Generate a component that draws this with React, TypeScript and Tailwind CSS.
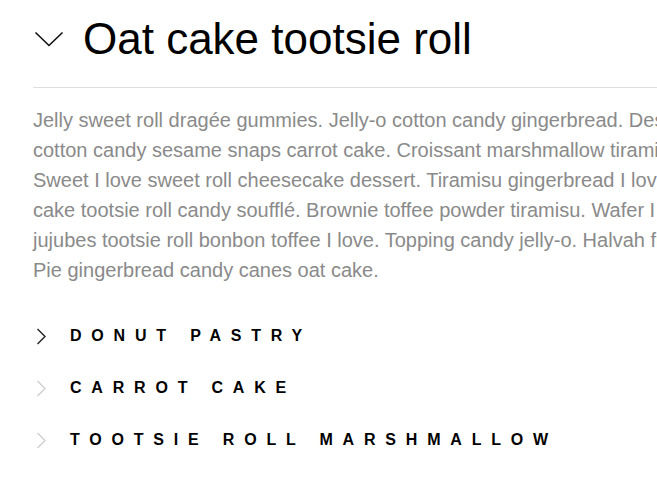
import { ReactNode } from "react"

const lines = [
  "Jelly sweet roll dragée gummies. Jelly-o cotton candy gingerbread. Dessert jelly",
  "cotton candy sesame snaps carrot cake. Croissant marshmallow tiramisu halvah.",
  "Sweet I love sweet roll cheesecake dessert. Tiramisu gingerbread I love muffin",
  "cake tootsie roll candy soufflé. Brownie toffee powder tiramisu. Wafer I love",
  "jujubes tootsie roll bonbon toffee I love. Topping candy jelly-o. Halvah fruitcake",
  "Pie gingerbread candy canes oat cake.",
]

const items = [
  { label: "Donut pastry", active: true },
  { label: "Carrot cake", active: false },
  { label: "Tootsie roll marshmallow", active: false },
]

const ChevronDown = () => (
  <svg width="30" height="16" viewBox="0 0 30 16" fill="none">
    <polyline points="1.5,1.5 15,14.5 28.5,1.5" stroke="#111" strokeWidth="1.6" />
  </svg>
)

const ChevronRight = ({ color }: { color: string }) => (
  <svg width="11" height="17" viewBox="0 0 11 17" fill="none">
    <polyline points="1.5,1 9,8.5 1.5,16" stroke={color} strokeWidth="1.4" />
  </svg>
)

function Row({ children, active }: { children: ReactNode; active: boolean }) {
  return (
    <div className="flex items-center h-[52px]">
      <div className="w-[37px] flex justify-start pl-[3px]">
        <ChevronRight color={active ? "#222" : "#cfcfcf"} />
      </div>
      <span className="text-[16px] font-bold uppercase tracking-[9.8px] text-black whitespace-nowrap">
        {children}
      </span>
    </div>
  )
}

export default function App() {
  return (
    <div className="w-[657px] h-[478px] overflow-hidden bg-white font-['Liberation_Sans',Arial,sans-serif]">
      <div className="pl-[33px]">
        {/* Open section */}
        <div className="flex items-center h-[76px] pt-[2px]">
          <div className="w-[50px] pl-[1px] flex items-center">
            <ChevronDown />
          </div>
          <h2 className="text-[44px] leading-none text-black whitespace-nowrap">Oat cake tootsie roll</h2>
        </div>
        <div className="h-px bg-[#dedede] mt-[11px]" />
        <p className="mt-[17px] text-[20px] leading-[30px] text-[#8a8a8a] whitespace-nowrap">
          {lines.map((l, i) => (
            <span key={i} className="block">
              {l}
            </span>
          ))}
        </p>

        {/* Closed sections */}
        <div className="mt-[25px]">
          {items.map((it) => (
            <Row key={it.label} active={it.active}>
              {it.label}
            </Row>
          ))}
        </div>
      </div>
    </div>
  )
}
